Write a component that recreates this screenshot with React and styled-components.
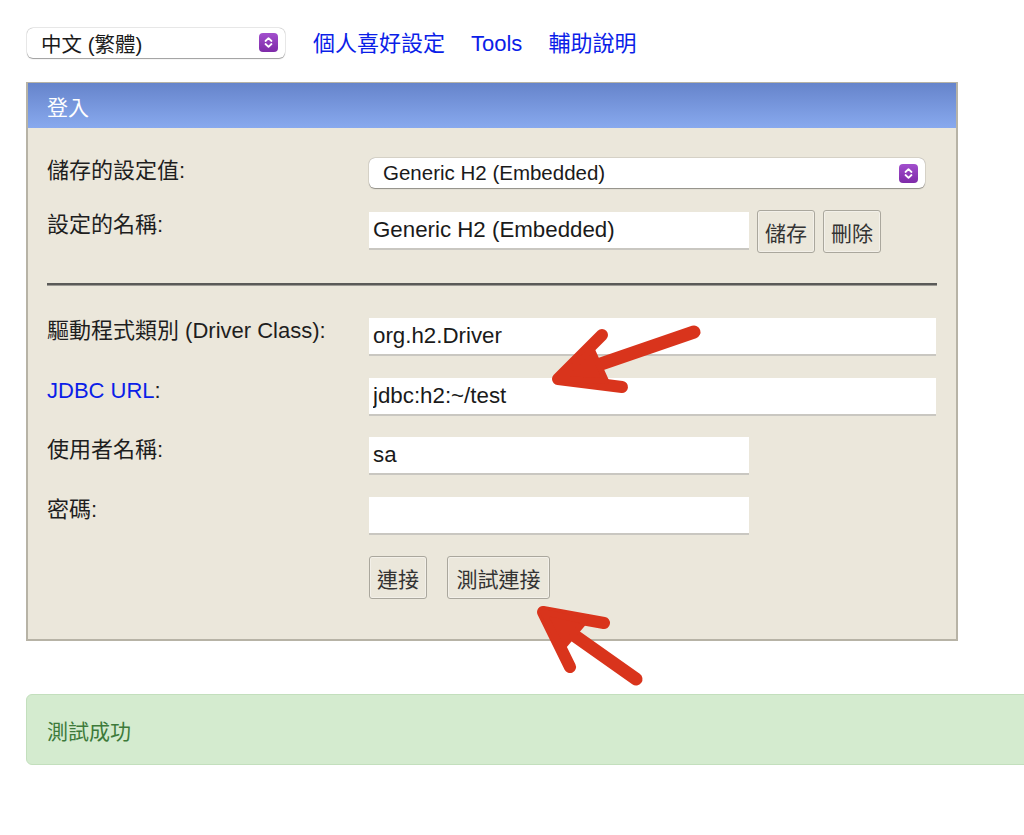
import styled, { createGlobalStyle } from "styled-components";

const GlobalStyle = createGlobalStyle`
  html, body {
    margin: 0;
    padding: 0;
    background: #fff;
  }
  body {
    font-family: "Liberation Sans", "Noto Sans CJK TC", sans-serif;
    color: #222;
  }
`;

const FONT = `"Liberation Sans", "Noto Sans CJK TC", sans-serif`;

function Chevrons() {
  return (
    <svg width="19" height="19" viewBox="0 0 19 19">
      <defs>
        <linearGradient id="pg" x1="0" y1="0" x2="0" y2="1">
          <stop offset="0" stopColor="#a24fcd" />
          <stop offset="1" stopColor="#7e2aa8" />
        </linearGradient>
      </defs>
      <rect x="0" y="0" width="19" height="19" rx="4" fill="url(#pg)" />
      <path
        d="M6.5 8 L9.5 5.2 L12.5 8 M6.5 11 L9.5 13.8 L12.5 11"
        stroke="#fff"
        strokeWidth="1.8"
        fill="none"
        strokeLinecap="round"
        strokeLinejoin="round"
      />
    </svg>
  );
}

function Select({ value, width }) {
  return (
    <SelectBox $width={width}>
      <span>{value}</span>
      <Chevrons />
    </SelectBox>
  );
}

function Arrows() {
  return (
    <Overlay width="1024" height="835" viewBox="0 0 1024 835">
      <g stroke="#d9341c" fill="#d9341c" strokeLinecap="round" strokeLinejoin="round">
        <path d="M694 332 L566 376" strokeWidth="13" fill="none" />
        <path d="M602 335 L558 379 L622 387" strokeWidth="12" fill="none" />
        <path d="M558 379 L592 350 L606 381 Z" strokeWidth="6" />
        <path d="M636 679 L551 619" strokeWidth="13" fill="none" />
        <path d="M604 623 L543 612 L570 667" strokeWidth="12" fill="none" />
        <path d="M543 612 L585 621 L562 648 Z" strokeWidth="6" />
      </g>
    </Overlay>
  );
}

export default function App() {
  return (
    <Page>
      <GlobalStyle />
      <TopBar>
        <Select value="中文 (繁體)" width="258px" />
        <Links>
          <a href="#">個人喜好設定</a>
          <a href="#">Tools</a>
          <a href="#">輔助說明</a>
        </Links>
      </TopBar>

      <Panel>
        <PanelHead>登入</PanelHead>
        <PanelBody>
          <Row>
            <Label>儲存的設定值:</Label>
            <Select value="Generic H2 (Embedded)" width="556px" />
          </Row>
          <Row $gap={24}>
            <Label>設定的名稱:</Label>
            <Field>
              <Input $short defaultValue="Generic H2 (Embedded)" />
              <Button>儲存</Button>
              <Button>刪除</Button>
            </Field>
          </Row>
          <Divider />
          <Row>
            <Label>驅動程式類別 (Driver Class):</Label>
            <Input defaultValue="org.h2.Driver" />
          </Row>
          <Row $gap={22}>
            <Label>
              <LinkText href="#">JDBC URL</LinkText>:
            </Label>
            <Input defaultValue="jdbc:h2:~/test" />
          </Row>
          <Row $gap={21}>
            <Label>使用者名稱:</Label>
            <Input $short defaultValue="sa" />
          </Row>
          <Row $gap={22}>
            <Label>密碼:</Label>
            <Input $short type="password" defaultValue="" />
          </Row>
          <Row $gap={23}>
            <Label />
            <Field $gap={20}>
              <Button>連接</Button>
              <Button $wide>測試連接</Button>
            </Field>
          </Row>
        </PanelBody>
      </Panel>

      <Success>測試成功</Success>
      <Arrows />
    </Page>
  );
}

const Page = styled.div`
  position: relative;
  width: 1024px;
  height: 835px;
  overflow: hidden;
  padding: 27px 0 0 26px;
  box-sizing: border-box;
`;

const Overlay = styled.svg`
  position: absolute;
  left: 0;
  top: 0;
  pointer-events: none;
`;

const TopBar = styled.div`
  display: flex;
  align-items: center;
  height: 31px;
  padding-left: 1px;
`;

const SelectBox = styled.div`
  width: ${(p) => p.$width};
  height: 30px;
  box-sizing: border-box;
  display: flex;
  align-items: center;
  justify-content: space-between;
  padding: 0 7px 0 14px;
  background: #fff;
  border-radius: 6px;
  box-shadow: 0 0.5px 1px rgba(0, 0, 0, 0.35), 0 0 0 0.5px rgba(0, 0, 0, 0.12);
  font-family: ${FONT};
  font-size: 20.5px;
  color: #1a1a1a;
`;

const Links = styled.div`
  display: flex;
  align-items: baseline;
  gap: 26px;
  margin-left: 28px;
  margin-top: 2px;

  a {
    font-family: ${FONT};
    font-size: 22px;
    line-height: 28px;
    color: #0b1ee8;
    text-decoration: none;
  }
`;

const Panel = styled.div`
  margin-top: 24px;
  width: 932px;
  box-sizing: border-box;
  background: #ebe7db;
  border: 2px solid #b7b3a6;
  border-top-width: 1px;
`;

const PanelHead = styled.div`
  height: 45px;
  display: flex;
  align-items: center;
  padding-left: 19px;
  background: linear-gradient(#6684cb, #88a9ee);
  color: #fff;
  font-family: ${FONT};
  font-size: 21px;
`;

const PanelBody = styled.div`
  padding: 30px 20px 40px 19px;
`;

const Row = styled.div`
  display: grid;
  grid-template-columns: 322px 1fr;
  align-items: start;
  margin-top: ${(p) => (p.$gap ? `${p.$gap}px` : 0)};
`;

const Label = styled.div`
  font-family: ${FONT};
  font-size: 22px;
  line-height: 26px;
  color: #1e1e1e;
`;

const LinkText = styled.a`
  color: #0b1ee8;
  text-decoration: none;
`;

const Field = styled.div`
  display: flex;
  align-items: flex-start;
  gap: ${(p) => (p.$gap ? `${p.$gap}px` : "8px")};
`;

const Input = styled.input`
  width: ${(p) => (p.$short ? "380px" : "567px")};
  height: 38px;
  box-sizing: border-box;
  border: none;
  border-bottom: 2px solid #c9c7c1;
  background: #fff;
  padding: 0 4px;
  margin: 0;
  font-family: ${FONT};
  font-size: 22.3px;
  color: #1a1a1a;
  outline: none;
`;

const Button = styled.button`
  height: 43px;
  min-width: ${(p) => (p.$wide ? "103px" : "58px")};
  box-sizing: border-box;
  margin: -2px 0 0 0;
  padding: 0 7px;
  background: #ebe7db;
  border: 1px solid #aaa79d;
  border-radius: 3px;
  box-shadow: inset 0 0 0 1px rgba(255, 255, 255, 0.4);
  font-family: ${FONT};
  font-size: 21px;
  color: #333;
`;

const Divider = styled.div`
  margin: 30px 0 32px 0;
  height: 2px;
  background: #5a5a58;
  border-bottom: 1px solid #9c9a94;
  width: 890px;
`;

const Success = styled.div`
  margin-top: 53px;
  width: 1010px;
  height: 71px;
  box-sizing: border-box;
  display: flex;
  align-items: center;
  padding-left: 20px;
  background: #d4ebcf;
  border: 1px solid #c3dfbd;
  border-radius: 6px;
  font-family: ${FONT};
  font-size: 21px;
  color: #3d7a3a;
`;
